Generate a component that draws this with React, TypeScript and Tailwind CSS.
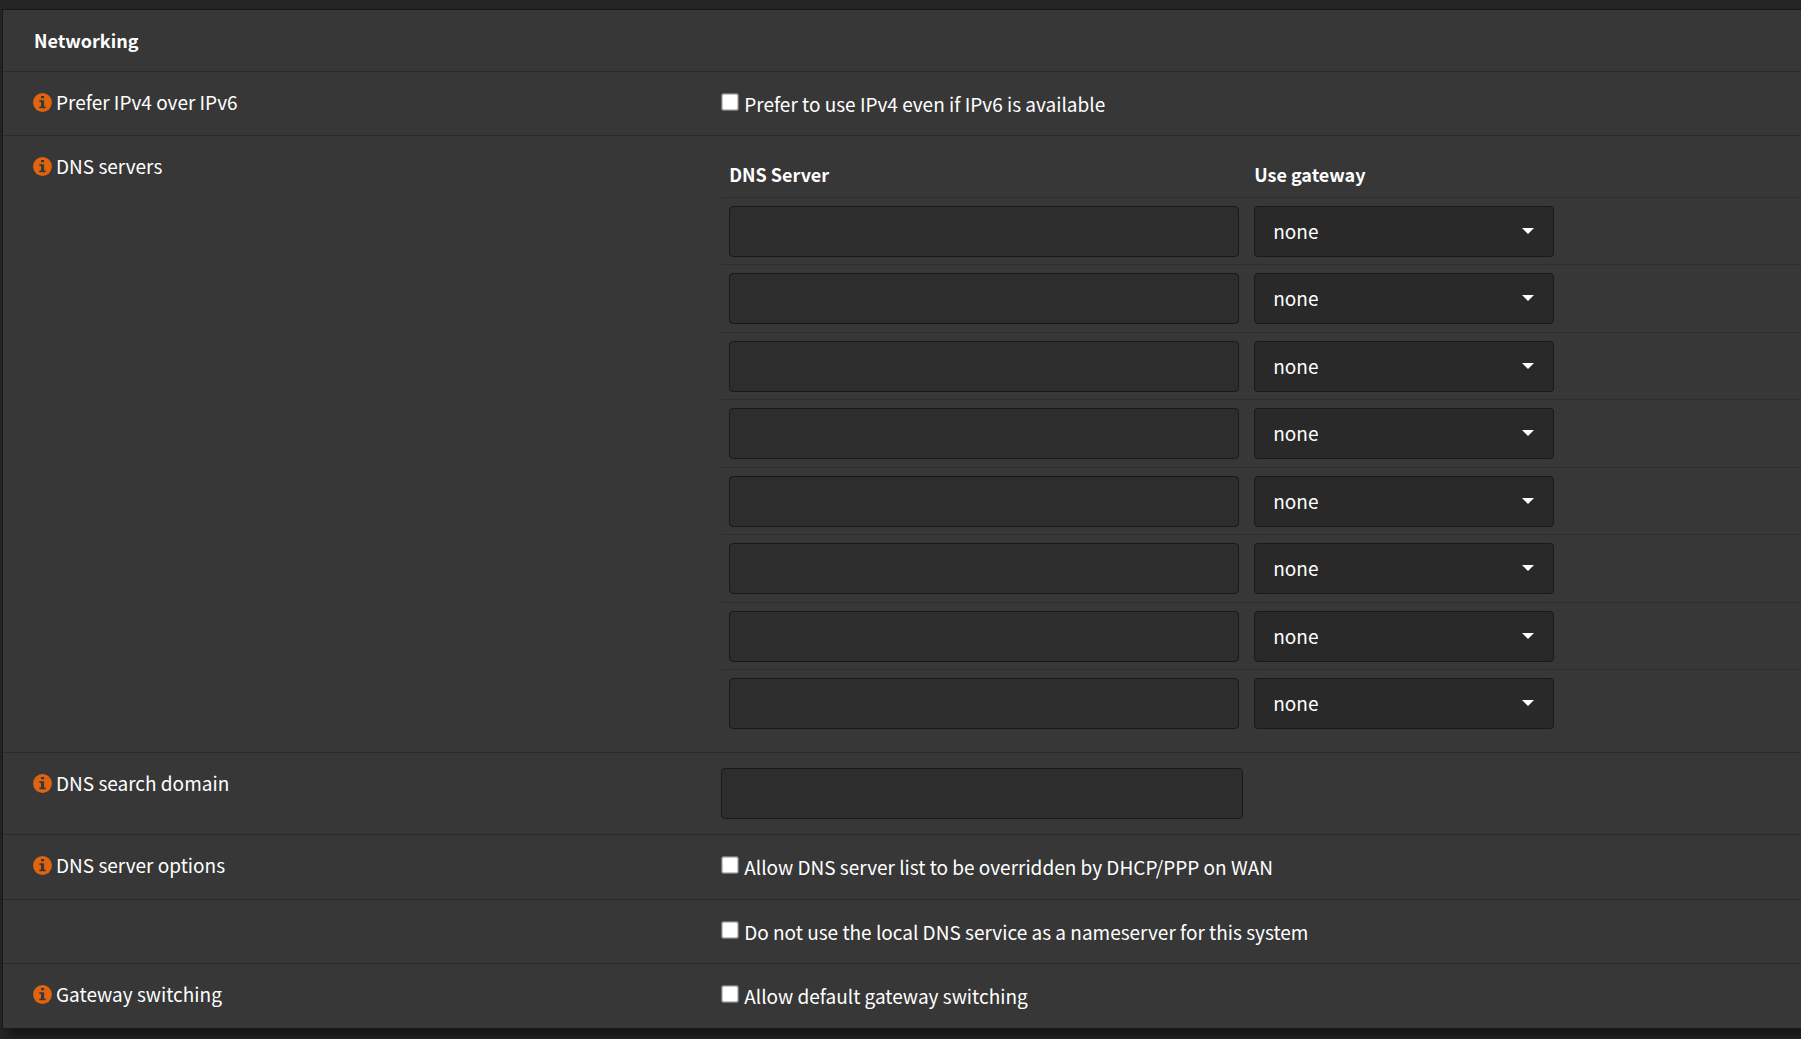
import React, { useId } from "react";

const servers = [1, 2, 3, 4, 5, 6, 7, 8];

function InfoIcon() {
  return (
    <svg viewBox="0 0 19 19" className="size-[19px] shrink-0" aria-hidden="true">
      <circle cx="9.5" cy="9.5" r="9.4" fill="#e0640f" />
      <path
        d="M8 2.9h3.1v2.4H8zM6.4 7.2h4.7v6.2h1.5v1.8H6.4v-1.8h1.6V9H6.4z"
        fill="#373737"
      />
    </svg>
  );
}

function Row({ label, children, className = "" }: { label?: string; children: React.ReactNode; className?: string }) {
  return (
    <div className={`flex items-start border-t border-[#2b2b2b] ${className}`}>
      <div className="w-[calc(40%-1px)] shrink-0 pt-[15px] pl-[30px]">
        {label && (
          <button type="button" className="flex items-center gap-1 text-left leading-[30px]">
            <InfoIcon />
            {label}
          </button>
        )}
      </div>
      <div className="min-w-0 grow">{children}</div>
    </div>
  );
}

function Check({ label }: { label: string }) {
  const id = useId();
  return (
    <div className="flex items-start gap-[5px] pt-[17px]">
      <input
        id={id}
        type="checkbox"
        className="mt-1 size-[18px] shrink-0 appearance-none rounded-[3px] border border-[#767676] bg-white shadow-[inset_0_0_0_1px_#c4c4c4] checked:bg-[#e0640f]"
      />
      <label htmlFor={id} className="leading-[30px]">
        {label}
      </label>
    </div>
  );
}

const field = "block h-[51px] rounded-[4px] border border-[#191919] bg-[#2d2d2d] px-[18px] outline-none";

export default function App() {
  return (
    <div className="min-h-screen overflow-hidden bg-[#252525] pt-[9px] pl-[2px] font-['Noto_Sans_CJK_SC',sans-serif] text-[19px] text-white">
      <form className="border-y border-l border-[#191919] bg-[#373737] shadow-[6px_6px_10px_#141414]">
        <h2 className="pt-[15px] pb-4 pl-[31px] text-[18px] leading-[30px] font-bold">Networking</h2>
        <Row label="Prefer IPv4 over IPv6" className="min-h-16">
          <Check label="Prefer to use IPv4 even if IPv6 is available" />
        </Row>
        <Row label="DNS servers" className="pb-[15px]">
          <table className="mt-[15px] w-full text-left">
            <thead>
              <tr className="h-[46px] text-[18px]">
                <th className="w-[525px] pl-2 leading-[30px] font-bold">DNS Server</th>
                <th className="pl-2 leading-[30px] font-bold">Use gateway</th>
              </tr>
            </thead>
            <tbody>
              {servers.map((n) => (
                <tr key={n} className="h-[67px] border-t border-[#2d2d2d] even:h-[68px]">
                  <td className="pt-2 pr-[7px] pl-2 align-top">
                    <input type="text" aria-label={`DNS server ${n}`} className={`${field} w-full`} />
                  </td>
                  <td className="pt-2 pl-2 align-top">
                    <div className="relative w-[300px]">
                      <select
                        aria-label={`Gateway for DNS server ${n}`}
                        className="block h-[51px] w-full appearance-none rounded-[4px] border border-[#191919] bg-[#292929] px-[18px] outline-none"
                      >
                        <option>none</option>
                      </select>
                      <svg
                        viewBox="0 0 12 6"
                        className="pointer-events-none absolute top-[22px] right-5 h-1.5 w-3"
                        aria-hidden="true"
                      >
                        <path d="M0 0h12L6 6z" fill="white" />
                      </svg>
                    </div>
                  </td>
                </tr>
              ))}
            </tbody>
          </table>
        </Row>
        <Row label="DNS search domain" className="min-h-[82px]">
          <input type="text" aria-label="DNS search domain" className={`${field} mt-[15px] w-[522px]`} />
        </Row>
        <Row label="DNS server options" className="min-h-[65px]">
          <Check label="Allow DNS server list to be overridden by DHCP/PPP on WAN" />
        </Row>
        <Row className="min-h-16">
          <Check label="Do not use the local DNS service as a nameserver for this system" />
        </Row>
        <Row label="Gateway switching" className="min-h-[65px]">
          <Check label="Allow default gateway switching" />
        </Row>
      </form>
    </div>
  );
}
